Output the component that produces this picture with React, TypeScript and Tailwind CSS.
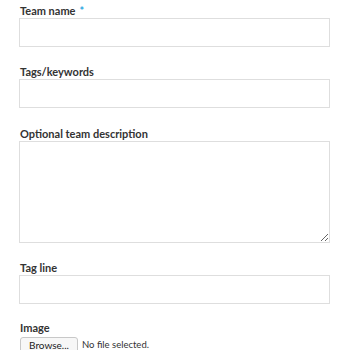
import React from "react";

const Label: React.FC<{ text: string; required?: boolean }> = ({ text, required }) => (
  <label className="block h-[15px] text-[11px] leading-[15px] font-bold text-[#333] pl-[1px]">
    {text}
    {required && <span className="ml-[4px] text-[#2aa7e1]">*</span>}
  </label>
);

const App: React.FC = () => {
  return (
    <div
      className="w-[350px] h-[350px] overflow-hidden bg-white pl-[19px] pt-[3px]"
      style={{ fontFamily: "Lato, 'Open Sans', sans-serif" }}
    >
      <form className="flex flex-col w-[311px]">
        {/* Team name */}
        <Label text="Team name" required />
        <input className="h-[29px] w-full border border-[#dedede] outline-none" />

        {/* Tags */}
        <div className="mt-[17px]">
          <Label text="Tags/keywords" />
          <input className="h-[29px] w-full border border-[#dedede] outline-none" />
        </div>

        {/* Description */}
        <div className="mt-[18px]">
          <Label text="Optional team description" />
          <textarea className="block h-[102px] w-full border border-[#dedede] outline-none resize-y" />
        </div>

        {/* Tag line */}
        <div className="mt-[17px]">
          <Label text="Tag line" />
          <input className="h-[29px] w-full border border-[#dedede] outline-none" />
        </div>

        {/* Image */}
        <div className="mt-[16px]">
          <Label text="Image" />
          <div className="mt-[2px] flex items-center gap-[4px] text-[9.5px] text-[#333]">
            <button
              type="button"
              className="h-[16px] w-[58px] ml-[1px] rounded-[3px] border border-[#c8c8c8] bg-[#f7f7f7] text-[10px] leading-[14px] text-[#222]"
            >
              Browse...
            </button>
            <span>No file selected.</span>
          </div>
        </div>
      </form>
    </div>
  );
};

export default App;
